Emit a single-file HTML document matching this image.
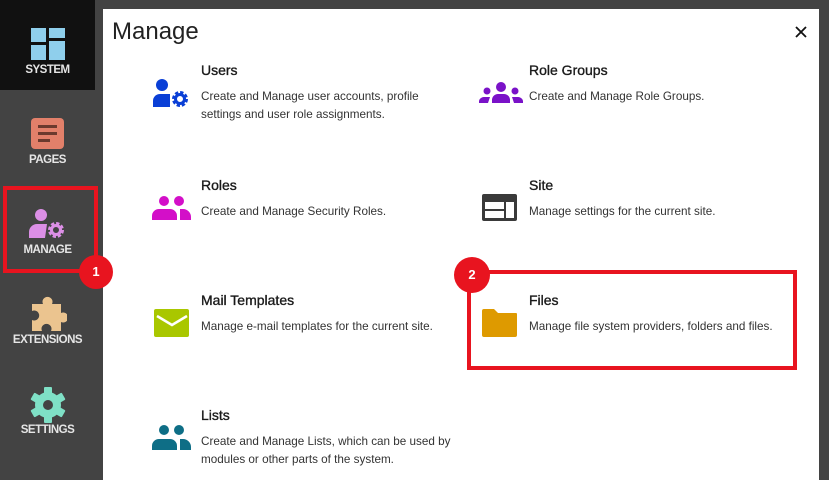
<!DOCTYPE html>
<html><head><style>
*{margin:0;padding:0;box-sizing:border-box}
body{width:829px;height:480px;overflow:hidden;background:#434343;position:relative;font-family:"Liberation Sans",sans-serif}
.a{position:absolute}
.lbl{position:absolute;width:95px;text-align:center;color:#e6e6e6;font-weight:bold;font-size:11.5px;letter-spacing:-0.5px}
.panel{position:absolute;left:103px;top:9px;width:716px;height:471px;background:#fff}
.t{position:absolute;font-size:14px;color:#1a1a1a;font-weight:normal;-webkit-text-stroke:0.35px #1a1a1a}
.d{position:absolute;font-size:11.7px;color:#333;line-height:18px}
</style></head><body>
<div class="a" style="left:0;top:0;width:95px;height:90px;background:#111"></div>
<svg class="a" style="left:31px;top:28px" width="34" height="32"><rect x="0" y="0" width="15" height="14" fill="#8fcfec"/><rect x="18" y="0" width="16" height="10" fill="#8fcfec"/><rect x="18" y="13" width="16" height="19" fill="#8fcfec"/><rect x="0" y="17" width="15" height="15" fill="#8fcfec"/></svg>
<div class="lbl" style="left:0;top:64px">SYSTEM</div>
<svg class="a" style="left:31px;top:118px" width="34" height="32"><rect width="33" height="31" rx="4" fill="#e2806a"/><rect x="7" y="7" width="19" height="3" fill="#6b3a2e"/><rect x="7" y="14" width="19" height="3" fill="#6b3a2e"/><rect x="7" y="21" width="12" height="3" fill="#6b3a2e"/></svg>
<div class="lbl" style="left:0;top:154px">PAGES</div>
<svg class="a" style="left:29px;top:209px" width="38" height="30"><circle cx="12" cy="6" r="6" fill="#dc8fe6"/><path d="M0 29v-6a8 8 0 0 1 8-8h10l-2 14z" fill="#dc8fe6"/><circle cx="27" cy="21" r="6" fill="none" stroke="#dc8fe6" stroke-width="4" stroke-dasharray="3 1.7"/><circle cx="27" cy="21" r="4.5" fill="none" stroke="#dc8fe6" stroke-width="3"/></svg>
<div class="lbl" style="left:0;top:244px">MANAGE</div>
<svg class="a" style="left:29px;top:296px" width="38" height="36"><path d="M6 8h8a5 5 0 1 1 9 0h9v9a5 5 0 1 1 0 9v9H22a5 5 0 1 0-9 0H3V24a5 5 0 1 0 0-9V8z" fill="#ebc48f"/></svg>
<div class="lbl" style="left:0;top:334px">EXTENSIONS</div>
<svg class="a" style="left:29px;top:386px" width="38" height="38"><g transform="translate(19,19)" fill="#7fe0c6"><circle r="13"/><rect x="-4" y="-18" width="8" height="36" rx="1"/><rect x="-4" y="-18" width="8" height="36" rx="1" transform="rotate(60)"/><rect x="-4" y="-18" width="8" height="36" rx="1" transform="rotate(120)"/><circle r="5" fill="#434343"/></g></svg>
<div class="lbl" style="left:0;top:424px">SETTINGS</div>

<div class="panel"></div>
<div class="a" style="left:112px;top:18px;font-size:24px;color:#222">Manage</div>
<svg class="a" style="left:795px;top:26px" width="12" height="12"><path d="M1 1L11 11M11 1L1 11" stroke="#111" stroke-width="1.8"/></svg>

<svg class="a" style="left:153px;top:79px" width="38" height="30"><circle cx="9" cy="6" r="6" fill="#0a3fd6"/><path d="M0 28v-6a7 7 0 0 1 7-7h10v13z" fill="#0a3fd6"/><circle cx="27" cy="20" r="6" fill="none" stroke="#0a3fd6" stroke-width="4" stroke-dasharray="3 1.7"/><circle cx="27" cy="20" r="4.5" fill="none" stroke="#0a3fd6" stroke-width="3"/></svg>
<div class="t" style="left:201px;top:62px">Users</div>
<div class="d" style="left:201px;top:88px">Create and Manage user accounts, profile<br>settings and user role assignments.</div>

<svg class="a" style="left:479px;top:82px" width="44" height="22"><circle cx="22" cy="5" r="5" fill="#7a12c8"/><circle cx="8" cy="9" r="3.5" fill="#7a12c8"/><circle cx="36" cy="9" r="3.5" fill="#7a12c8"/><path d="M13 21v-3a6 6 0 0 1 6-6h6a6 6 0 0 1 6 6v3z M0 21a5 5 0 0 1 5-6h6l-2 6z M44 21a5 5 0 0 0-5-6h-6l2 6z" fill="#7a12c8"/></svg>
<div class="t" style="left:529px;top:62px">Role Groups</div>
<div class="d" style="left:529px;top:88px">Create and Manage Role Groups.</div>

<svg class="a" style="left:152px;top:196px" width="40" height="25"><circle cx="12" cy="5" r="5" fill="#d30fc8"/><circle cx="27" cy="5" r="5" fill="#d30fc8"/><path d="M0 24v-4a7 7 0 0 1 7-7h11a7 7 0 0 1 7 7v4z M28 13h3a8 8 0 0 1 8 8v3h-11z" fill="#d30fc8"/></svg>
<div class="t" style="left:201px;top:177px">Roles</div>
<div class="d" style="left:201px;top:203px">Create and Manage Security Roles.</div>

<svg class="a" style="left:482px;top:194px" width="36" height="28"><rect width="35" height="27" rx="2" fill="#3a3a3a"/><rect x="3" y="8" width="19" height="7" fill="#fff"/><rect x="3" y="17" width="19" height="7" fill="#fff"/><rect x="24" y="8" width="8" height="16" fill="#fff"/></svg>
<div class="t" style="left:529px;top:177px">Site</div>
<div class="d" style="left:529px;top:203px">Manage settings for the current site.</div>

<svg class="a" style="left:154px;top:309px" width="36" height="29"><rect width="35" height="28" rx="2" fill="#a9c700"/><path d="M3 7l15 9 15-9" fill="none" stroke="#fff" stroke-width="2.5"/></svg>
<div class="t" style="left:201px;top:292px">Mail Templates</div>
<div class="d" style="left:201px;top:318px">Manage e-mail templates for the current site.</div>

<svg class="a" style="left:482px;top:309px" width="36" height="29"><path d="M0 2a2 2 0 0 1 2-2h10l4 4h18a1 1 0 0 1 1 1v21a2 2 0 0 1-2 2H2a2 2 0 0 1-2-2z" fill="#de9a00"/></svg>
<div class="t" style="left:529px;top:292px">Files</div>
<div class="d" style="left:529px;top:318px">Manage file system providers, folders and files.</div>

<svg class="a" style="left:152px;top:425px" width="40" height="26"><circle cx="12" cy="5" r="5" fill="#0e6e86"/><circle cx="27" cy="5" r="5" fill="#0e6e86"/><path d="M0 25v-4a7 7 0 0 1 7-7h11a7 7 0 0 1 7 7v4z M28 14h3a8 8 0 0 1 8 8v3h-11z" fill="#0e6e86"/></svg>
<div class="t" style="left:201px;top:407px">Lists</div>
<div class="d" style="left:201px;top:433px">Create and Manage Lists, which can be used by<br>modules or other parts of the system.</div>

<div class="a" style="left:3px;top:186px;width:95px;height:87px;border:4px solid #e8141f"></div>
<div class="a" style="left:79px;top:255px;width:34px;height:34px;border-radius:50%;background:#e8141f;color:#fff;font-weight:bold;font-size:13px;text-align:center;line-height:34px">1</div>
<div class="a" style="left:467px;top:270px;width:330px;height:100px;border:4px solid #e8141f"></div>
<div class="a" style="left:454px;top:257px;width:36px;height:36px;border-radius:50%;background:#e8141f;color:#fff;font-weight:bold;font-size:13px;text-align:center;line-height:36px">2</div>
</body></html>
